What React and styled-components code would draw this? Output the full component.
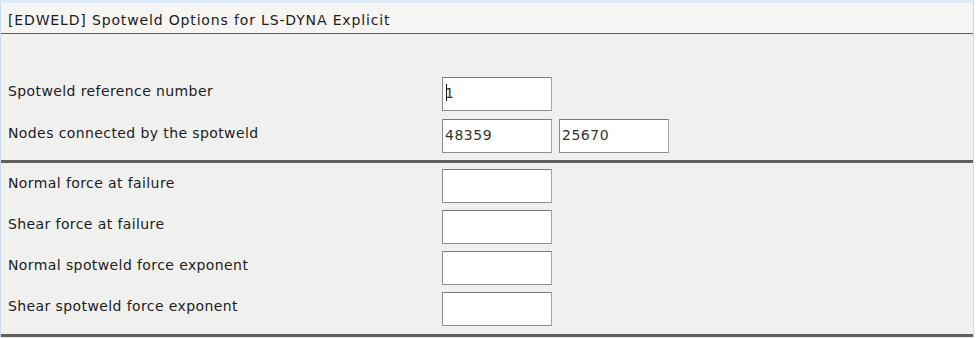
import React from "react";
import styled, { createGlobalStyle } from "styled-components";

const GlobalStyle = createGlobalStyle`
  html, body {
    margin: 0;
    padding: 0;
    background: #ffffff;
  }
  body {
    font-family: "DejaVu Sans", "Liberation Sans", sans-serif;
    overflow: hidden;
  }
`;

const topFields = [
  { label: "Spotweld reference number", values: ["1"], caret: true },
  { label: "Nodes connected by the spotweld", values: ["48359", "25670"] },
];

const failureFields = [
  { label: "Normal force at failure", values: [""] },
  { label: "Shear force at failure", values: [""] },
  { label: "Normal spotweld force exponent", values: [""] },
  { label: "Shear spotweld force exponent", values: [""] },
];

const App = () => {
  return (
    <>
      <GlobalStyle />
      <Panel>
        <TitleBar>[EDWELD] Spotweld Options for LS-DYNA Explicit</TitleBar>
        <Section top={43} bottom={7} gap={8}>
          {topFields.map((field) => (
            <FieldRow key={field.label}>
              <Label>{field.label}</Label>
              <Inputs>
                {field.values.map((value, i) => (
                  <TextBox key={i} caret={field.caret && i === 0}>
                    {value}
                  </TextBox>
                ))}
              </Inputs>
            </FieldRow>
          ))}
        </Section>
        <Divider />
        <Section top={6} bottom={8} gap={7}>
          {failureFields.map((field) => (
            <FieldRow key={field.label}>
              <Label>{field.label}</Label>
              <Inputs>
                {field.values.map((value, i) => (
                  <TextBox key={i}>{value}</TextBox>
                ))}
              </Inputs>
            </FieldRow>
          ))}
        </Section>
        <Divider />
      </Panel>
    </>
  );
};

export default App;

const Panel = styled.div`
  width: 974px;
  height: 338px;
  background-color: #f0f0ef;
  border-left: 1px solid #c9dcef;
  border-right: 1px solid #d6d6d6;
  border-top: 3px solid #dde9f5;
  box-sizing: border-box;
  display: flex;
  flex-direction: column;
  color: #1c1c1c;
`;

const TitleBar = styled.div`
  height: 31px;
  display: flex;
  align-items: center;
  padding: 4px 0 0 7px;
  box-sizing: border-box;
  background-color: #f6f5f3;
  border-bottom: 1px solid #5e5e5e;
  font-size: 14px;
  letter-spacing: 0.85px;
`;

const Section = styled.div`
  display: flex;
  flex-direction: column;
  gap: ${(props) => props.gap}px;
  padding: ${(props) => props.top}px 0 ${(props) => props.bottom}px 7px;
`;

const FieldRow = styled.div`
  display: grid;
  grid-template-columns: 434px auto;
  height: 34px;
`;

const Label = styled.div`
  font-size: 14px;
  line-height: 16px;
  padding-top: 6px;
  letter-spacing: 0.4px;
  white-space: nowrap;
`;

const Inputs = styled.div`
  display: flex;
  gap: 7px;
`;

const TextBox = styled.div`
  width: 110px;
  height: 34px;
  box-sizing: border-box;
  background-color: #ffffff;
  border: 1px solid #a9a9a9;
  border-top-color: #7a7a7a;
  border-left-color: #8c8c8c;
  border-bottom-color: #8c8c8c;
  font-size: 14px;
  line-height: 16px;
  letter-spacing: 0.5px;
  padding: 7px 0 0 2px;
  color: #333333;
  position: relative;

  ${(props) =>
    props.caret &&
    `
    &::before {
      content: "";
      position: absolute;
      left: 3px;
      top: 6px;
      width: 1px;
      height: 17px;
      background: #111111;
    }
  `}
`;

const Divider = styled.div`
  height: 3px;
  background-color: #5f5f5f;
  flex-shrink: 0;
`;
